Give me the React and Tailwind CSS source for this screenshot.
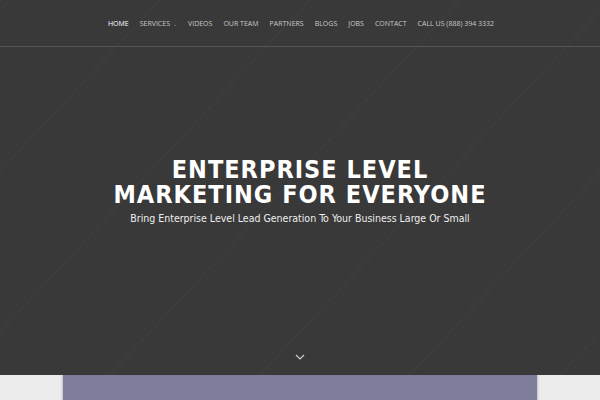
import React from "react";

const navItems = [
  "Home",
  "Services",
  "Videos",
  "Our Team",
  "Partners",
  "Blogs",
  "Jobs",
  "Contact",
  "Call Us (888) 394 3332",
];

function Stripes() {
  const xs = [-120, 30, 180, 330, 480, 630, 780];
  return (
    <svg
      className="pointer-events-none absolute inset-0 h-full w-full"
      viewBox="0 0 600 375"
      preserveAspectRatio="none"
    >
      {xs.map((x) => (
        <line
          key={x}
          x1={x + 130}
          y1={0}
          x2={x - 220}
          y2={375}
          stroke="#424242"
          strokeWidth="1"
        />
      ))}
    </svg>
  );
}

export default function App() {
  return (
    <div className="min-h-screen w-[600px] overflow-hidden bg-[#ececec]">
      <section className="relative flex h-[375px] flex-col bg-[#393939]">
        <Stripes />
        <header className="relative flex h-[47px] items-center justify-center border-b border-[#555555] pt-[3px] font-['Open_Sans',sans-serif]">
          <nav className="flex items-center gap-[11px] pl-[2px]">
            {navItems.map((item, i) => (
              <a
                key={item}
                className={`flex items-center text-[7px] uppercase ${
                  i === 0 ? "text-white" : "text-[#c8c8c8]"
                }`}
              >
                {item}
                {item === "Services" && (
                  <span className="ml-[3px] text-[5px] text-[#999999]">&#8964;</span>
                )}
              </a>
            ))}
          </nav>
        </header>

        <div className="relative flex flex-1 flex-col items-center pt-[110px] text-white">
          <h1 className="text-center font-['DejaVu_Sans_Condensed','DejaVu_Sans',sans-serif] text-[25px] font-bold uppercase leading-[25px] tracking-[0.04em]">
            Enterprise Level
            <br />
            Marketing For Everyone
          </h1>
          <p className="mt-[4px] font-['DejaVu_Sans_Condensed','DejaVu_Sans',sans-serif] text-[10.5px] text-[#eeeeee]">
            Bring Enterprise Level Lead Generation To Your Business Large Or Small
          </p>
          <div className="mt-auto mb-[15px]">
            <svg width="10" height="6" viewBox="0 0 10 6" fill="none">
              <path d="M1 1l4 4 4-4" stroke="#cfcfcf" strokeWidth="1.2" />
            </svg>
          </div>
        </div>
      </section>

      <section className="flex justify-center">
        <div className="h-[40px] w-[474px] bg-[#7f7d9c] shadow-[0_0_3px_rgba(0,0,0,0.35)]" />
      </section>
    </div>
  );
}
